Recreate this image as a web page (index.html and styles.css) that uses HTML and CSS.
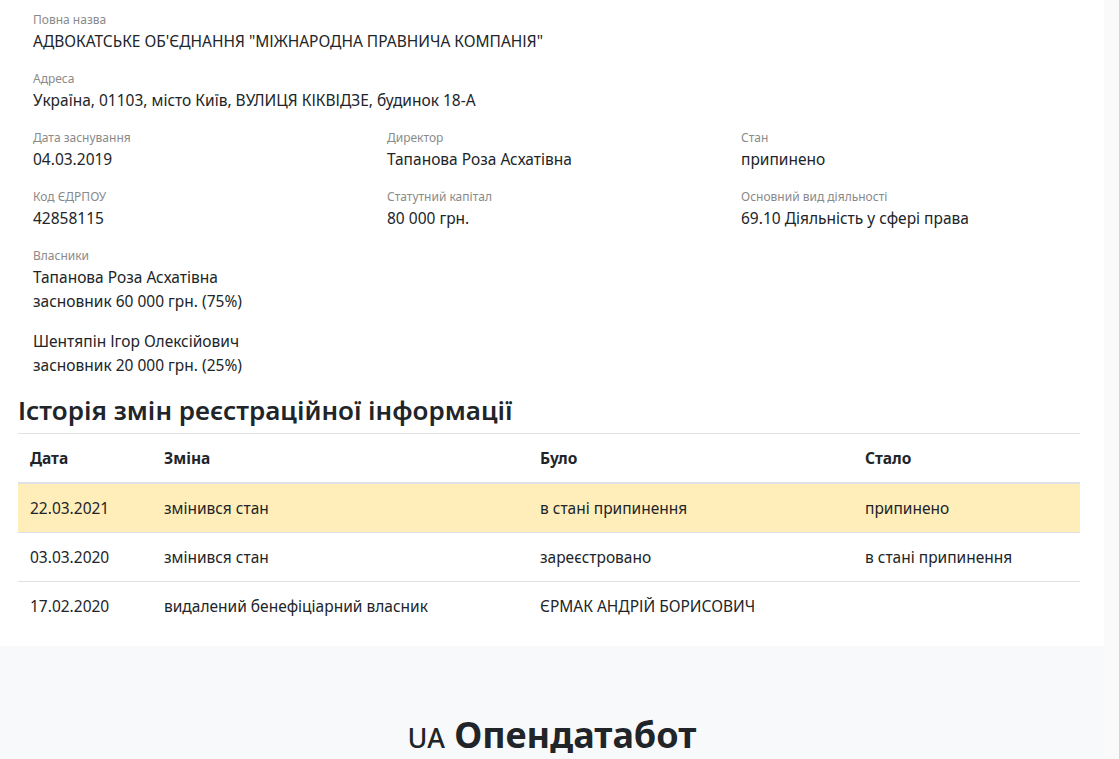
FILE: index.html
```html
<!DOCTYPE html>
<html lang="uk">
<head>
  <meta charset="UTF-8">
  <meta name="viewport" content="width=device-width, initial-scale=1.0">
  <title>АДВОКАТСЬКЕ ОБ'ЄДНАННЯ "МІЖНАРОДНА ПРАВНИЧА КОМПАНІЯ" - Опендатабот</title>
  <link rel="stylesheet" href="styles.css">
</head>
<body>
  <div class="page">
    <div class="content">
      <main class="container">
        <div class="field">
          <div class="label">Повна назва</div>
          <div class="value">АДВОКАТСЬКЕ ОБ'ЄДНАННЯ "МІЖНАРОДНА ПРАВНИЧА КОМПАНІЯ"</div>
        </div>
        <div class="field">
          <div class="label">Адреса</div>
          <div class="value">Україна, 01103, місто Київ, ВУЛИЦЯ КІКВІДЗЕ, будинок 18-А</div>
        </div>

        <div class="info-grid">
          <div class="field">
            <div class="label">Дата заснування</div>
            <div class="value">04.03.2019</div>
          </div>
          <div class="field">
            <div class="label">Директор</div>
            <div class="value">Тапанова Роза Асхатівна</div>
          </div>
          <div class="field">
            <div class="label">Стан</div>
            <div class="value">припинено</div>
          </div>
          <div class="field">
            <div class="label">Код ЄДРПОУ</div>
            <div class="value">42858115</div>
          </div>
          <div class="field">
            <div class="label">Статутний капітал</div>
            <div class="value">80 000 грн.</div>
          </div>
          <div class="field">
            <div class="label">Основний вид діяльності</div>
            <div class="value">69.10 Діяльність у сфері права</div>
          </div>
        </div>

        <div class="field owners">
          <div class="label">Власники</div>
          <div class="owner">
            <div class="value">Тапанова Роза Асхатівна</div>
            <div class="value">засновник 60 000 грн. (75%)</div>
          </div>
          <div class="owner">
            <div class="value">Шентяпін Ігор Олексійович</div>
            <div class="value">засновник 20 000 грн. (25%)</div>
          </div>
        </div>

        <h3 class="section-title">Історія змін реєстраційної інформації</h3>
        <table class="history">
          <thead>
            <tr>
              <th class="col-date">Дата</th>
              <th class="col-change">Зміна</th>
              <th class="col-was">Було</th>
              <th>Стало</th>
            </tr>
          </thead>
          <tbody>
            <tr class="row-warning">
              <td>22.03.2021</td>
              <td>змінився стан</td>
              <td>в стані припинення</td>
              <td>припинено</td>
            </tr>
            <tr>
              <td>03.03.2020</td>
              <td>змінився стан</td>
              <td>зареєстровано</td>
              <td>в стані припинення</td>
            </tr>
            <tr>
              <td>17.02.2020</td>
              <td>видалений бенефіціарний власник</td>
              <td>ЄРМАК АНДРІЙ БОРИСОВИЧ</td>
              <td></td>
            </tr>
          </tbody>
        </table>
      </main>

      <footer class="footer">
        <div class="brand"><span class="brand-country">UA</span> Опендатабот</div>
      </footer>
    </div>
    <div class="scroll-track"></div>
  </div>
</body>
</html>
```

FILE: styles.css
```css
:root {
  --text-color: #212529;
  --muted-color: #8a8a8a;
  --border-color: #dee2e6;
  --warning-bg: #ffeeba;
  --footer-bg: #f8f9fa;
}

body {
  margin: 0;
  font-family: 'Noto Sans', 'Open Sans', 'DejaVu Sans', sans-serif;
  font-size: 15.5px;
  line-height: 24px;
  color: var(--text-color);
  background-color: #fff;
}

.page {
  display: flex;
  min-height: 100vh;
}

.content {
  flex: 1;
  min-width: 0;
}

.scroll-track {
  width: 15px;
  flex-shrink: 0;
  background-color: #fafafa;
}

.container {
  width: 1062px;
  margin: 0 18px;
  padding: 10px 0 16px;
}

.field {
  padding: 0 15px;
  margin-bottom: 16px;
}

.label {
  font-size: 12px;
  line-height: 19px;
  color: var(--muted-color);
}

.info-grid {
  display: grid;
  grid-template-columns: repeat(3, 1fr);
}

.owner + .owner {
  margin-top: 16px;
}

.section-title {
  margin: 0;
  padding-bottom: 6px;
  font-size: 26px;
  line-height: 34px;
  font-weight: 600;
  border-bottom: 1px solid var(--border-color);
}

.history {
  width: 100%;
  border-collapse: collapse;
}

.history th,
.history td {
  padding: 12px;
  text-align: left;
  vertical-align: top;
}

.history th {
  font-weight: 700;
  border-bottom: 2px solid var(--border-color);
}

.history td {
  border-top: 1px solid var(--border-color);
}

.history tbody tr:first-child td {
  border-top: none;
}

.col-date {
  width: 110px;
}

.col-change {
  width: 352px;
}

.col-was {
  width: 301px;
}

.row-warning td {
  background-color: var(--warning-bg);
}

.footer {
  background-color: var(--footer-bg);
  padding: 67px 0 40px;
  text-align: center;
}

.brand {
  font-size: 36px;
  line-height: 44px;
  font-weight: 700;
}

.brand-country {
  font-size: 27px;
  font-weight: 500;
}
```
